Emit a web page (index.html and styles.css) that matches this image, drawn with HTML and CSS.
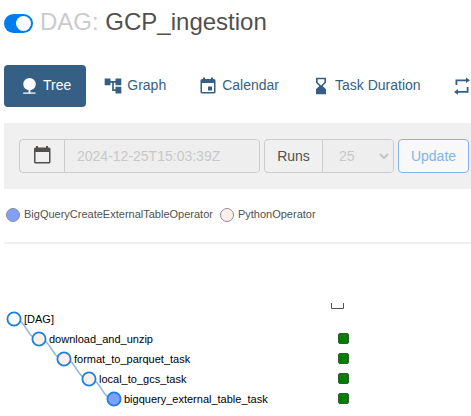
FILE: index.html
```
<!DOCTYPE html>
<html lang="en">
<head>
<meta charset="utf-8">
<title>GCP_ingestion - Tree</title>
<link rel="stylesheet" href="styles.css">
</head>
<body>
<header class="title">
  <span class="switch"></span>
  <h1><span class="muted">DAG:</span> GCP_ingestion</h1>
</header>
<nav class="tabs">
  <a class="tab active"><svg width="20" height="20" viewBox="0 0 20 20"><circle cx="10.500" cy="8.200" r="6.2"/><path d="M9.600 13h1.800v3.600h5.100v1.200H4.200v-1.200h5.400z"/></svg>Tree</a>
  <a class="tab graph"><svg width="20" height="20" viewBox="0 0 24 24"><path d="M22 11V3h-7v3H9V3H2v8h7V8h2v10h4v3h7v-8h-7v3h-2V8h2v3z"/></svg>Graph</a>
  <a class="tab calendar"><svg width="20" height="20" viewBox="0 0 20 20"><path fill-rule="evenodd" d="M5 1.500h2V3h6V1.500h2V3h1q1.500 0 1.500 1.500V16q0 1.500-1.500 1.500H4q-1.500 0-1.500-1.500V4.500Q2.500 3 4 3h1zM4 7v9h12V7zM10 10.500h4v4h-4z"/></svg>Calendar</a>
  <a class="tab duration"><svg width="20" height="20" viewBox="0 0 24 24"><path d="M6 2v6l4 4-4 4v6h12v-6l-4-4 4-4V2H6zm10 5.500l-4 4-4-4V4h8v3.500z"/><path d="M12 13l-4 4v4h8v-4z"/></svg>Task Duration</a>
  <a class="tab tries" aria-label="Task Tries"><svg width="20" height="20" viewBox="0 0 20 20"><path d="M3.500 9V3.400h10.500V1.500l4 2.800-4 2.800V5.200H5.300V9zM16.500 11v5.800H6v1.900l-4-2.800 4-2.800V15h8.700v-4z"/></svg></a>
</nav>
<form class="filters">
  <div class="group date">
    <span class="addon"><svg width="20" height="20" viewBox="0 0 20 20"><path fill-rule="evenodd" d="M4 1h2v1.500h8V1h2v1.500h1q1.500 0 1.500 1.500V17q0 1.500-1.500 1.500H3.500Q2 18.500 2 17V4Q2 2.500 3.500 2.500H4zM3.500 7v10H17V7z"/></svg></span>
    <span class="field">2024-12-25T15:03:39Z</span>
  </div>
  <div class="group runs">
    <span class="addon">Runs</span>
    <span class="field">25<svg width="10" height="8" viewBox="0 0 10 8"><path d="M1 2l4 4 4-4"/></svg></span>
  </div>
  <span class="update">Update</span>
</form>
<div class="legend">
  <span><i class="dot blue"></i>BigQueryCreateExternalTableOperator</span>
  <span><i class="dot pink"></i>PythonOperator</span>
</div>
<svg class="tree" width="471" height="172" viewBox="0 244 471 172">
  <path class="axis" d="M331.500 303v5.500h12V303"/>
  <g class="links">
    <path d="M14 319C26.500 319 26.500 339 39 339"/>
    <path d="M39 339C51.500 339 51.500 359 64 359"/>
    <path d="M64 359C76.500 359 76.500 379 89 379"/>
    <path d="M89 379C101.500 379 101.500 399 114 399"/>
  </g>
  <g class="nodes">
    <circle class="root" cx="14" cy="319" r="6.600"/>
    <circle cx="39" cy="339" r="6.600"/>
    <circle cx="64" cy="359" r="6.600"/>
    <circle cx="89" cy="379" r="6.600"/>
    <circle class="bq" cx="114" cy="399" r="6.600"/>
  </g>
  <g class="labels">
    <text x="24" y="323">[DAG]</text>
    <text x="49" y="343">download_and_unzip</text>
    <text x="74" y="363">format_to_parquet_task</text>
    <text x="99" y="383">local_to_gcs_task</text>
    <text x="124" y="403">bigquery_external_table_task</text>
  </g>
  <g class="states">
    <rect x="338.500" y="333.500" width="10" height="10" rx="1.500"/>
    <rect x="338.500" y="353.500" width="10" height="10" rx="1.500"/>
    <rect x="338.500" y="373.500" width="10" height="10" rx="1.500"/>
    <rect x="338.500" y="393.500" width="10" height="10" rx="1.500"/>
  </g>
</svg>
</body>
</html>
```
FILE: styles.css
```
* { box-sizing: border-box; }
body {
  margin: 0;
  width: 471px;
  height: 416px;
  overflow: hidden;
  background: #fff;
  font: 14px/20px "Liberation Sans", Arial, sans-serif;
  color: #51504f;
}
.title {
  display: flex;
  align-items: center;
  height: 65px;
  padding: 0 0 21px 4px;
}
.switch {
  width: 29px;
  height: 19px;
  margin-top: 3px;
  padding: 2px;
  border-radius: 10px;
  background: #017cee;
}
.switch::after {
  content: "";
  display: block;
  width: 15px;
  height: 15px;
  margin-left: 10px;
  border-radius: 50%;
  background: #fff;
}
h1 {
  margin: 0 0 0 7px;
  font-size: 24px;
  font-weight: 400;
  line-height: 30px;
  white-space: nowrap;
}
.muted { color: #cbcbcb; }
.tabs {
  display: flex;
  gap: 2px;
  height: 58px;
  padding-left: 4px;
  overflow: hidden;
}
.tab {
  display: flex;
  flex: none;
  align-items: center;
  gap: 4px;
  height: 42px;
  padding: 0 15px 2px;
  border-radius: 4px;
  color: #355f84;
  white-space: nowrap;
}
.tab svg { fill: currentColor; margin-top: 2px; }
.tries { padding: 0 0 2px 14px; }
.active { color: #fff; background: #355f84; }
.filters {
  display: flex;
  gap: 4px;
  height: 66px;
  margin-left: 4px;
  padding: 16px 0 16px 15px;
  background: #f0f0f0;
}
.group {
  display: flex;
  flex: none;
  height: 34px;
  border: 1px solid #ccc;
  border-radius: 4px;
}
.date { width: 241px; }
.runs { width: 130px; }
.addon {
  display: flex;
  flex: none;
  align-items: center;
  justify-content: center;
  width: 45px;
  border-right: 1px solid #ccc;
}
.addon svg { fill: #51504f; margin-top: -2px; }
.runs .addon { width: 58px; }
.field {
  display: flex;
  flex: 1;
  align-items: center;
  justify-content: space-between;
  padding: 0 4px 0 12px;
  border-radius: 0 3px 3px 0;
  background: #eee;
  color: #c8c8c8;
}
.runs .field { padding-left: 16px; }
.field svg { fill: none; stroke: #c4c4c4; stroke-width: 2; }
.update {
  flex: none;
  width: 71px;
  height: 34px;
  border: 1px solid #80b5e9;
  border-radius: 4px;
  background: #f8f8f8;
  color: #80b5e9;
  line-height: 32px;
  text-align: center;
}
.legend {
  display: flex;
  gap: 7px;
  height: 55px;
  margin-left: 4px;
  padding: 18px 0 0 2px;
  border-bottom: 2px solid #f0f0f0;
  font-size: 11px;
  line-height: 15px;
}
.legend span { display: flex; gap: 4px; }
.dot {
  width: 14px;
  height: 14px;
  margin-top: 1px;
  border: 1px solid #8e8c98;
  border-radius: 50%;
}
.blue { background: #819fff; }
.pink { background: #ffefeb; }
.tree { display: block; }
.axis { fill: none; stroke: #51504f; }
.links { fill: none; stroke: #91bbe0; stroke-width: 1.500px; }
.nodes { fill: #ffefeb; stroke: #1c80df; stroke-width: 1.800px; }
.root { fill: #fff; }
.bq { fill: #819fff; }
.labels { fill: #000; font-size: 11px; }
.states { fill: #008000; stroke: #315c31; }
```
